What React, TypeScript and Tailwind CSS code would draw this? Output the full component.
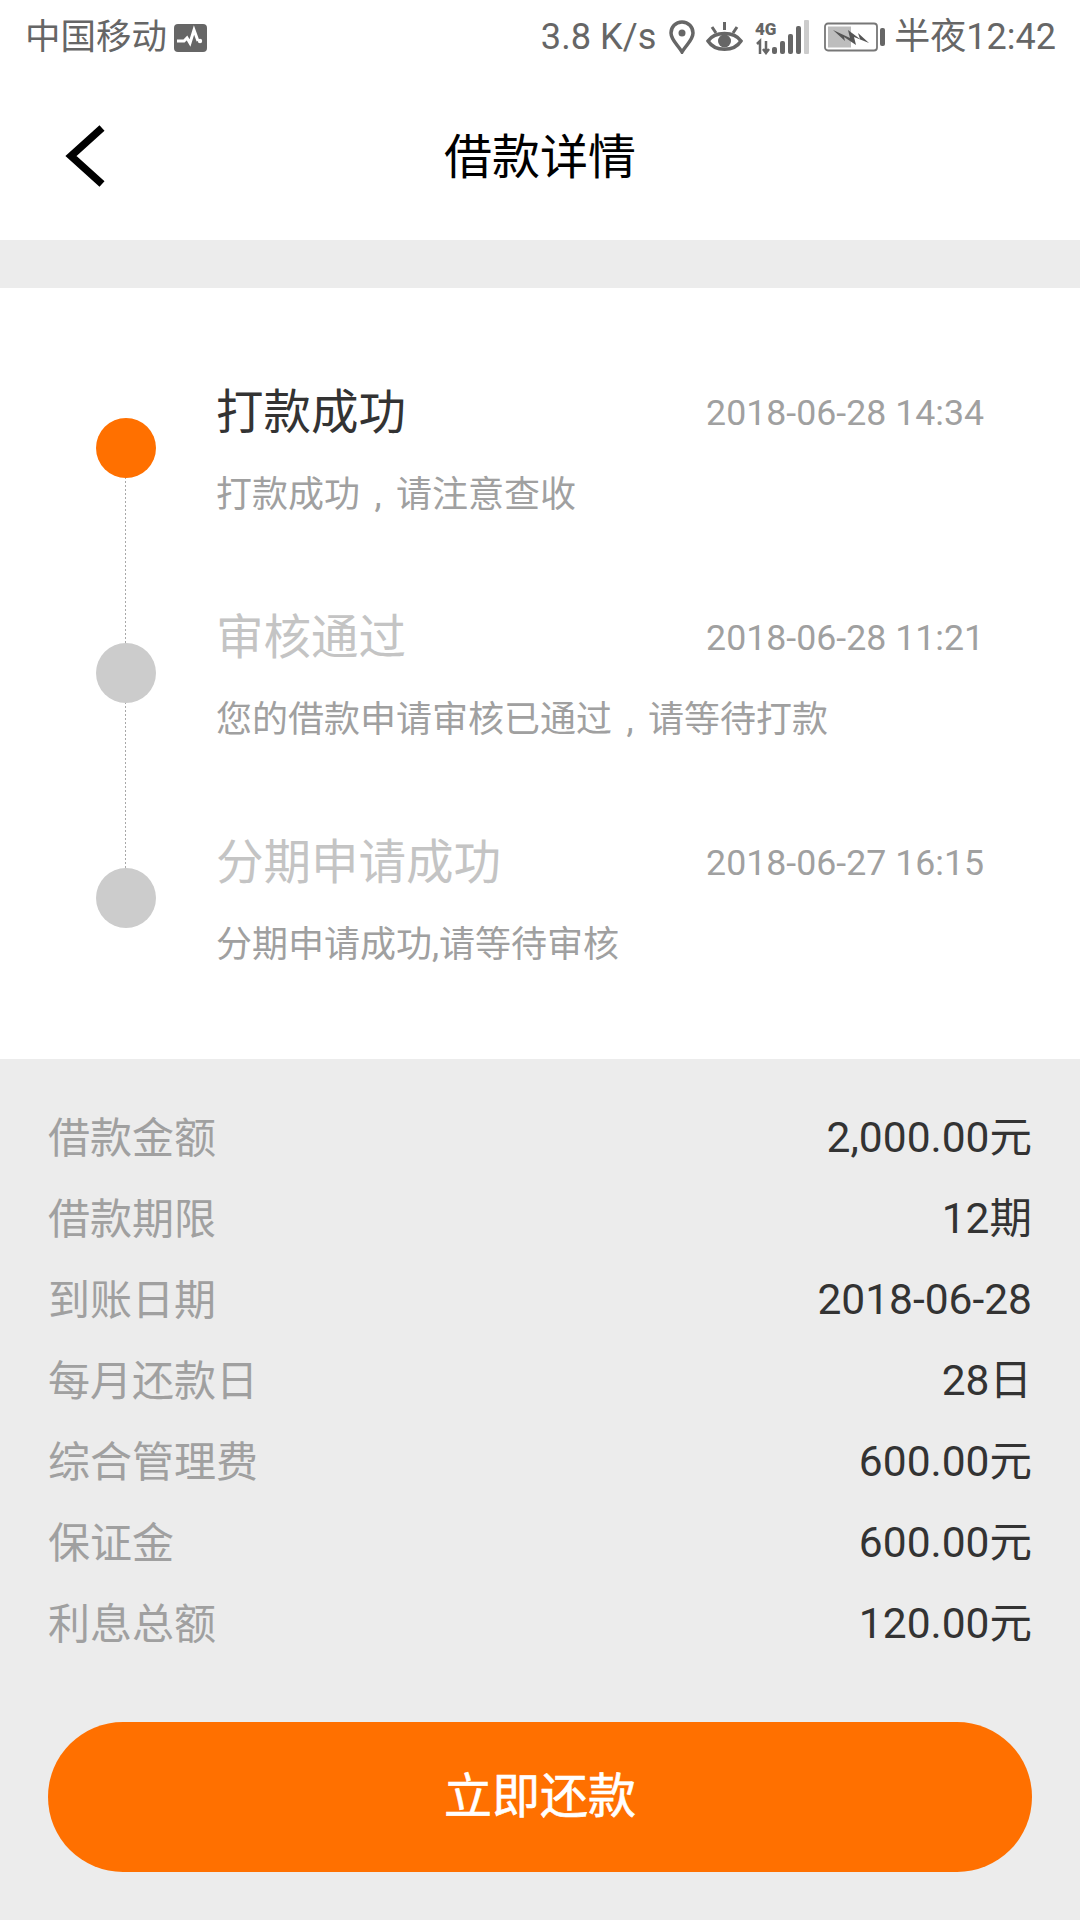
const FONT = "font-['Roboto','Noto_Sans_CJK_SC',sans-serif]";

const Comma = () => <span className="inline-block w-[36px] text-center font-['Roboto']">,</span>;

const steps = [
  { title: "打款成功", date: "2018-06-28 14:34", note: <>打款成功<Comma />请注意查收</>, active: true },
  { title: "审核通过", date: "2018-06-28 11:21", note: <>您的借款申请审核已通过<Comma />请等待打款</>, active: false },
  { title: "分期申请成功", date: "2018-06-27 16:15", note: <>分期申请成功,请等待审核</>, active: false },
];

const rows = [
  ["借款金额", "2,000.00元"],
  ["借款期限", "12期"],
  ["到账日期", "2018-06-28"],
  ["每月还款日", "28日"],
  ["综合管理费", "600.00元"],
  ["保证金", "600.00元"],
  ["利息总额", "120.00元"],
];

function StatusBar() {
  return (
    <div className="h-[75px] flex items-center justify-between pl-[25px] pr-[24px] text-[36px] text-[#666666] leading-none">
      <div className="flex items-center gap-[7px]">
        <span className="text-[35.500px]">中国移动</span>
        <svg width="33" height="28" viewBox="0 0 33 28">
          <rect width="33" height="28" rx="4" fill="#666666" />
          <path d="M3 17h7l3-3 3 5 4-13 4 11" fill="none" stroke="#fff" strokeWidth="3" />
          <circle cx="26" cy="17" r="2.200" fill="#fff" />
        </svg>
      </div>
      <div className="flex items-center">
        <span className="text-[36.200px]">3.8 K/s</span>
        <svg className="ml-[13px]" width="26" height="34" viewBox="0 0 26 34">
          <path d="M13 2C6.500 2 2 7 2 13c0 7 7 12 11 19 4-7 11-12 11-19C24 7 19.500 2 13 2z" fill="none" stroke="#666666" strokeWidth="3.500" />
          <circle cx="13" cy="13" r="3.500" fill="#666666" />
        </svg>
        <svg className="ml-[11px]" width="37" height="33" viewBox="0 0 37 33">
          <path d="M2 20C9 10 28 10 35 20 28 31 9 31 2 20z" fill="none" stroke="#666666" strokeWidth="3.500" />
          <circle cx="18.500" cy="20" r="6.500" fill="#666666" />
          <path d="M6 6l4 6M18.500 1v8M31 6l-4 6" stroke="#666666" strokeWidth="3" />
        </svg>
        <svg className="ml-[12px]" width="54" height="35" viewBox="0 0 54 35">
          <text x="0" y="15" fontSize="17" fontWeight="900" fill="#666666" fontFamily="Roboto">4G</text>
          <path d="M2 24l3-3v13M11 21v11m-3-3l3 4 3-4" fill="none" stroke="#666666" strokeWidth="2.500" />
          <rect x="17" y="27" width="5" height="7" rx="2" fill="#666666" />
          <rect x="25" y="21" width="5" height="13" rx="2" fill="#666666" />
          <rect x="33" y="14" width="5" height="20" rx="2" fill="#666666" />
          <rect x="41" y="6" width="5" height="28" rx="2" fill="#666666" />
          <rect x="49" y="0" width="5" height="34" rx="1" fill="#cccccc" />
        </svg>
        <svg className="ml-[15px]" width="61" height="31" viewBox="0 0 61 31">
          <rect x="1" y="1.500" width="52" height="27" rx="3" fill="none" stroke="#777777" strokeWidth="1.800" />
          <rect x="4" y="4.500" width="23" height="21" fill="#bdbdbd" />
          <path d="M9 8L26 16L24 8L36 17L34 11L45 21L30 15L32 23L20 15L21 19z" fill="#555555" />
          <rect x="56" y="6" width="5" height="18" rx="2" fill="#666666" />
        </svg>
        <span className="ml-[9px]">半夜12:42</span>
      </div>
    </div>
  );
}

function Header() {
  return (
    <div className="h-[165px] relative flex items-center justify-center">
      <svg className="absolute left-[62px] top-[49px]" width="46" height="64" viewBox="0 0 46 64">
        <path d="M40 4L9 32l31 28" fill="none" stroke="#000000" strokeWidth="7.500" />
      </svg>
      <span className="text-[48px] leading-none text-black">借款详情</span>
    </div>
  );
}

function Timeline() {
  return (
    <div className="bg-white pt-[100px] h-[771px] pl-[96px] pr-[96px]">
      {steps.map((s, i) => (
        <div key={s.title} className="h-[225px] flex relative">
          {i < steps.length - 1 && (
            <div className="absolute left-[29px] top-[45px] h-[225px] w-[1px] bg-[repeating-linear-gradient(to_bottom,#a8a8a8_0,#a8a8a8_2px,transparent_2px,transparent_4px)]" />
          )}
          <div className={`relative mt-[30px] w-[60px] h-[60px] rounded-full shrink-0 ${s.active ? "bg-[#ff7000]" : "bg-[#cccccc]"}`} />
          <div className="ml-[60px] flex-1">
            <div className="flex items-center justify-between h-[50px] pt-[2px]">
              <span className={`text-[47.500px] leading-none ${s.active ? "text-[#333333]" : "text-[#c4c4c4]"}`}>{s.title}</span>
              <span className="text-[35.700px] leading-none text-[#a0a0a0]">{s.date}</span>
            </div>
            <div className="mt-[39px] text-[36px] leading-none text-[#a0a0a0]">{s.note}</div>
          </div>
        </div>
      ))}
    </div>
  );
}

export default function App() {
  return (
    <div className={`w-[1080px] h-[1920px] bg-white flex flex-col overflow-hidden ${FONT}`}>
      <StatusBar />
      <Header />
      <div className="h-[48px] bg-[#ececec]" />
      <Timeline />
      <div className="flex-1 bg-[#ececec] px-[48px] pt-[39px]">
        {rows.map(([k, v]) => (
          <div key={k} className="h-[81px] flex items-center justify-between text-[42px] leading-none">
            <span className="text-[#a0a0a0]">{k}</span>
            <span className="text-[#333333] text-[42.500px]">{v}</span>
          </div>
        ))}
        <button className="mt-[57px] w-full h-[150px] rounded-full bg-[#ff7000] text-white text-[48px] leading-none [-webkit-text-stroke:0.6px_white]">
          立即还款
        </button>
      </div>
    </div>
  );
}
